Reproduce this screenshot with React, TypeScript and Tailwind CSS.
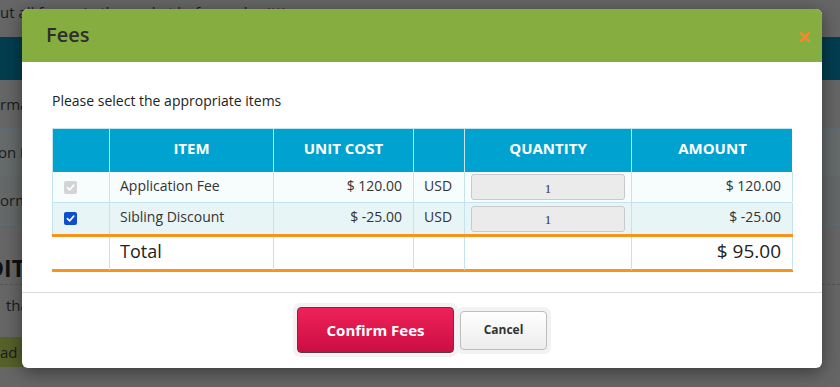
import React from "react";

const font = { fontFamily: "'Open Sans', Lato, 'Liberation Sans', sans-serif" };

function Check({ disabled }: { disabled?: boolean }) {
  return (
    <div
      className={
        "w-[13px] h-[13px] rounded-[2px] flex items-center justify-center " +
        (disabled ? "bg-[#d4d4d4]" : "bg-[#0b4fcc]")
      }
    >
      <svg width="9" height="9" viewBox="0 0 10 10">
        <path d="M1.5 5.2 L4 7.6 L8.6 2.4" fill="none" stroke="white" strokeWidth="1.8" strokeLinecap="round" strokeLinejoin="round" />
      </svg>
    </div>
  );
}

function QtyBox() {
  return (
    <div className="h-[26px] w-full rounded-[3px] border border-[#c9c9c9] bg-[#ebebeb] flex items-center justify-center text-[13px] text-[#333] pt-[3px]" style={{ fontFamily: "'Liberation Serif', serif" }}>
      1
    </div>
  );
}

export default function App() {
  const cols = "grid grid-cols-[57px_164px_140px_51px_167px_161px]";
  const cell = "border-r border-[#c3e4ec] h-full flex items-center";
  const t = " pb-[4px]";
  return (
    <div className="relative w-[840px] h-[387px] overflow-hidden bg-[#666666]" style={font}>
      {/* background page (dimmed) */}
      <div className="flex flex-col w-full text-[#1b1b1b]">
        <div className="h-[37px] pt-[1px] text-[15px] leading-[22px] whitespace-nowrap">ut all forms in the packet before submitting</div>
        <div className="h-[43px] bg-[#033d50]" />
        <div className="h-[48px] flex items-center text-[15px]">rmat</div>
        <div className="h-[47px] border-t border-[#5d6d72] bg-[#656a6b] flex items-center text-[15px] -ml-[2px]">on F</div>
        <div className="h-[49px] border-t border-[#5d6d72] bg-[#646869] flex items-center text-[15px]">orm</div>
        <div className="h-[60px] border-t border-[#5d6d72] flex items-end pb-[4px] text-[23px] font-bold leading-[23px] -ml-[13px] text-[#111]">DIT</div>
        <div className="border-t border-dashed border-[#555] h-[36px] flex items-center text-[15px] pl-[6px] pt-[14px] pb-[8px]">that</div>
        <div className="h-[17px]" />
        <div className="h-[30px] w-[40px] bg-[#55602a] flex items-center text-[15px]">ad</div>
      </div>

      {/* modal */}
      <div className="absolute left-[22px] top-[9px] w-[800px] h-[359px] bg-white rounded-[6px] shadow-[0_4px_18px_rgba(0,0,0,0.45)] flex flex-col overflow-hidden">
        <div className="h-[53px] bg-[#86ad3f] flex items-center justify-between pl-[24px] pr-[12px]">
          <div className="text-[20px] font-semibold text-[#2e2e2e] -mt-[2px]">Fees</div>
          <svg width="10" height="10" viewBox="0 0 10 10" className="mt-[2px]">
            <path d="M1.2 1.2 L8.8 8.8 M8.8 1.2 L1.2 8.8" stroke="#f58a2c" strokeWidth="2.6" strokeLinecap="round" />
          </svg>
        </div>

        <div className="px-[30px] pt-[30px]">
          <div className="text-[14px] text-[#222] leading-[18px]">Please select the appropriate items</div>
          <div className="mt-[18px] w-[740px] border-l border-[#c3e4ec]">
            <div className={cols + " h-[44px] bg-[#00a2cf] text-white text-[15px] font-bold border-t border-[#c3e4ec]"}>
              <div className="border-r border-[#c3e4ec]" />
              <div className={cell + " justify-center" + t}>ITEM</div>
              <div className={cell + " justify-center" + t}>UNIT COST</div>
              <div className={cell} />
              <div className={cell + " justify-center" + t}>QUANTITY</div>
              <div className={cell + " justify-center border-r-0" + t}>AMOUNT</div>
            </div>
            <div className={cols + " h-[31px] bg-[#f7fcfd] text-[14px] text-[#333] border-b border-[#c3e4ec]"}>
              <div className={cell + " pl-[11px]"}><Check disabled /></div>
              <div className={cell + " pl-[10px]" + t}>Application Fee</div>
              <div className={cell + " justify-end pr-[11px]" + t}>$ 120.00</div>
              <div className={cell + " pl-[10px]" + t}>USD</div>
              <div className={cell + " px-[6px]"}><QtyBox /></div>
              <div className={cell + " justify-end pr-[11px]" + t}>$ 120.00</div>
            </div>
            <div className={cols + " h-[31px] bg-[#e8f5f7] text-[14px] text-[#333]"}>
              <div className={cell + " pl-[11px]"}><Check /></div>
              <div className={cell + " pl-[10px]" + t}>Sibling Discount</div>
              <div className={cell + " justify-end pr-[11px]" + t}>$ -25.00</div>
              <div className={cell + " pl-[10px]" + t}>USD</div>
              <div className={cell + " px-[6px]"}><QtyBox /></div>
              <div className={cell + " justify-end pr-[11px]" + t}>$ -25.00</div>
            </div>
            <div className={cols + " h-[38px] bg-white text-[#222] border-y-[3px] border-[#f7941d] -ml-[1px] w-[741px] pl-[1px]"}>
              <div className={cell} />
              <div className={cell + " pl-[10px] text-[18px]" + t}>Total</div>
              <div className={cell} />
              <div className={cell} />
              <div className={cell} />
              <div className={cell + " justify-end pr-[11px] text-[19px]" + t}>$ 95.00</div>
            </div>
          </div>
        </div>

        <div className="mt-[20px] border-t border-[#dcdcdc] flex justify-center items-center pt-[10px]">
          <div className="p-[4px] rounded-[7px] bg-[#f2f2f2]">
            <div className="w-[157px] h-[46px] rounded-[4px] border border-[#5a3a44] bg-gradient-to-b from-[#ee2158] to-[#cc0d44] text-white text-[15px] font-bold flex items-center justify-center">
              Confirm Fees
            </div>
          </div>
          <div className="p-[4px] rounded-[7px] bg-[#f2f2f2] -ml-[2px]">
            <div className="w-[87px] h-[39px] rounded-[4px] border border-[#bdbdbd] bg-gradient-to-b from-[#ffffff] to-[#ececec] text-[#333] text-[12px] font-bold flex items-center justify-center">
              Cancel
            </div>
          </div>
        </div>
      </div>
    </div>
  );
}
